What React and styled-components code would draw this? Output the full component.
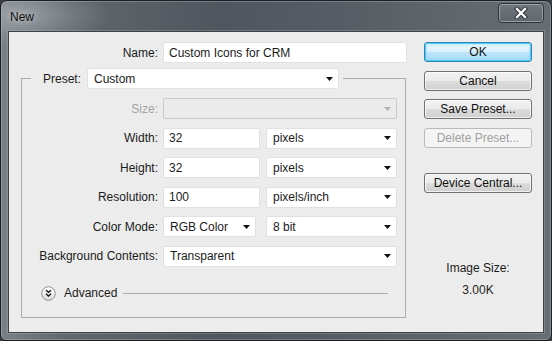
import React from "react";
import styled, { createGlobalStyle } from "styled-components";

const Global = createGlobalStyle`
  html, body { margin: 0; padding: 0; background: #3a3d40; }
  body { font-family: "Liberation Sans", Arial, sans-serif; font-size: 12px; }
  * { box-sizing: border-box; }
`;

const Window = styled.div`
  width: 552px;
  height: 341px;
  border: 1px solid #1c2024;
  border-radius: 7px 7px 6px 6px;
  padding: 0 7px 7px 7px;
  display: flex;
  flex-direction: column;
  background:
    radial-gradient(ellipse 90px 30px at 20px 14px, rgba(200,205,210,0.45), rgba(200,205,210,0) 100%),
    linear-gradient(90deg, #7a8086 0%, #60676d 12%, #4f565d 40%, #555c63 60%, #5e656b 80%, #676d73 100%);
  box-shadow: inset 0 0 0 1px rgba(190,196,202,0.35);
`;

const TitleBar = styled.div`
  height: 30px;
  display: flex;
  align-items: center;
  justify-content: space-between;
  padding-left: 2px;
`;

const Title = styled.span`
  color: #111;
  font-size: 12px;
  margin-top: 2px;
  text-shadow: 0 0 6px rgba(255,255,255,0.6);
`;

const CloseButton = styled.div`
  align-self: flex-start;
  width: 46px;
  height: 20px;
  margin-top: 2px;
  border: 1px solid #2f3439;
  border-radius: 4px;
  box-shadow: inset 0 0 0 1px rgba(170,177,184,0.75);
  background: linear-gradient(180deg, rgba(125,132,139,0.45), rgba(90,97,104,0.45));
  display: flex;
  align-items: center;
  justify-content: center;
`;

const Client = styled.div`
  flex: 1;
  display: flex;
  background: #ececec;
  border: 1px solid #3d4348;
  box-shadow: 0 0 0 1px rgba(200,206,210,0.25);
`;

const LeftPane = styled.div`
  width: 398px;
  padding-top: 10px;
  display: flex;
  flex-direction: column;
`;

const Row = styled.div`
  display: grid;
  grid-template-columns: ${(p) => p.$label}px 1fr;
  column-gap: 5px;
  align-items: center;
  height: 21px;
`;

const Label = styled.span`
  text-align: right;
  color: ${(p) => (p.$disabled ? "#a3a3a3" : "#1b1b1b")};
  white-space: nowrap;
`;

const Input = styled.div`
  height: 21px;
  width: ${(p) => (p.$w ? `${p.$w}px` : "auto")};
  background: #fff;
  border: 1px solid #e1e1e1;
  border-radius: 2px;
  padding-left: 5px;
  display: flex;
  align-items: center;
  color: #1b1b1b;
  white-space: nowrap;
`;

const SelectBox = styled.div`
  height: 21px;
  width: ${(p) => (p.$w ? `${p.$w}px` : "auto")};
  background: ${(p) => (p.$disabled ? "#ebebeb" : "#fff")};
  border: 1px solid ${(p) => (p.$disabled ? "#c9c9c9" : "#e1e1e1")};
  border-radius: 2px;
  padding: 0 5px 0 6px;
  display: flex;
  align-items: center;
  justify-content: space-between;
  color: #1b1b1b;
  white-space: nowrap;
`;

const Controls = styled.div`
  display: flex;
  justify-content: space-between;
  height: 21px;
`;

const Group = styled.fieldset`
  margin: 5px 0 0 12px;
  width: 385px;
  border: 1px solid #acacac;
  padding: 0 8px 17px 0;
  min-width: 0;
`;

const Legend = styled.legend`
  margin-left: 9px;
  padding: 0 4px 0 12px;
  display: flex;
  align-items: center;
  height: 21px;
`;

const LegendLabel = styled.span`
  width: 44px;
  color: #1b1b1b;
`;

const Rows = styled.div`
  margin-top: 9px;
  display: flex;
  flex-direction: column;
  gap: 8.5px;
`;

const AdvancedRow = styled.div`
  margin: 19.5px 9px 0 19px;
  height: 14px;
  display: flex;
  align-items: center;
`;

const AdvancedText = styled.span`
  margin-left: 8px;
  color: #1b1b1b;
`;

const Rule = styled.div`
  flex: 1;
  height: 1px;
  margin-left: 6px;
  background: #acacac;
`;

const RightPane = styled.div`
  width: 108px;
  margin-left: 17px;
  padding-top: 10px;
  display: flex;
  flex-direction: column;
  align-items: stretch;
`;

const Button = styled.div`
  height: 20px;
  margin-top: ${(p) => p.$mt ?? 8.5}px;
  border-radius: 3px;
  display: flex;
  align-items: center;
  justify-content: center;
  white-space: nowrap;
  color: ${(p) => (p.$disabled ? "#a0a0a0" : "#111")};
  border: 1px solid ${(p) => (p.$primary ? "#3c7fb1" : p.$disabled ? "#b7bbbe" : "#707070")};
  background: ${(p) =>
    p.$primary
      ? "linear-gradient(180deg, #eaf6fd 0%, #d9f0fc 50%, #bee6fd 50%, #a7d9f5 100%)"
      : p.$disabled
      ? "#f4f4f4"
      : "linear-gradient(180deg, #f2f2f2 0%, #ebebeb 50%, #dddddd 50%, #cfcfcf 100%)"};
  box-shadow: ${(p) =>
    p.$primary
      ? "inset 0 0 0 1px #48d0fb, inset 0 0 3px 1px rgba(120,220,255,0.7)"
      : p.$disabled
      ? "none"
      : "inset 0 0 0 1px rgba(255,255,255,0.7)"};
`;

const InfoLabel = styled.div`
  text-align: center;
  color: #1b1b1b;
  margin-top: ${(p) => p.$mt}px;
  line-height: 14px;
`;

function Arrow({ disabled }) {
  return (
    <svg width="7" height="4" viewBox="0 0 7 4">
      <path d="M0 0 H7 L3.5 4 Z" fill={disabled ? "#b5b5b5" : "#111"} />
    </svg>
  );
}

function Select({ w, disabled, children }) {
  return (
    <SelectBox $w={w} $disabled={disabled}>
      <span>{children}</span>
      <Arrow disabled={disabled} />
    </SelectBox>
  );
}

function AdvancedIcon() {
  return (
    <svg width="15" height="15" viewBox="0 0 15 15">
      <defs>
        <linearGradient id="adv" x1="0" y1="0" x2="0" y2="1">
          <stop offset="0" stopColor="#ffffff" />
          <stop offset="1" stopColor="#dcdcdc" />
        </linearGradient>
      </defs>
      <circle cx="7.5" cy="7.5" r="6.8" fill="url(#adv)" stroke="#8e8e8e" strokeWidth="1" />
      <path d="M5 4.2 L7.5 6.4 L10 4.2" fill="none" stroke="#1a1a1a" strokeWidth="1.4" />
      <path d="M5 7.8 L7.5 10 L10 7.8" fill="none" stroke="#1a1a1a" strokeWidth="1.4" />
    </svg>
  );
}

function CloseGlyph() {
  return (
    <svg width="14" height="12" viewBox="0 0 14 12">
      <path d="M3 2 L11 10 M11 2 L3 10" stroke="#2a2e32" strokeWidth="4.2" strokeLinecap="square" />
      <path d="M3 2 L11 10 M11 2 L3 10" stroke="#ffffff" strokeWidth="2.3" strokeLinecap="square" />
    </svg>
  );
}

export default function App() {
  return (
    <>
      <Global />
      <Window>
        <TitleBar>
          <Title>New</Title>
          <CloseButton>
            <CloseGlyph />
          </CloseButton>
        </TitleBar>
        <Client>
          <LeftPane>
            <Row $label={149}>
              <Label>Name:</Label>
              <Input $w={244}>Custom Icons for CRM</Input>
            </Row>
            <Group>
              <Legend>
                <LegendLabel>Preset:</LegendLabel>
                <Select w={252}>Custom</Select>
              </Legend>
              <Rows>
                <Row $label={136}>
                  <Label $disabled>Size:</Label>
                  <Select disabled> </Select>
                </Row>
                <Row $label={136}>
                  <Label>Width:</Label>
                  <Controls>
                    <Input $w={97}>32</Input>
                    <Select w={131}>pixels</Select>
                  </Controls>
                </Row>
                <Row $label={136}>
                  <Label>Height:</Label>
                  <Controls>
                    <Input $w={97}>32</Input>
                    <Select w={131}>pixels</Select>
                  </Controls>
                </Row>
                <Row $label={136}>
                  <Label>Resolution:</Label>
                  <Controls>
                    <Input $w={97}>100</Input>
                    <Select w={131}>pixels/inch</Select>
                  </Controls>
                </Row>
                <Row $label={136}>
                  <Label>Color Mode:</Label>
                  <Controls>
                    <Select w={93}>RGB Color</Select>
                    <Select w={131}>8 bit</Select>
                  </Controls>
                </Row>
                <Row $label={136}>
                  <Label>Background Contents:</Label>
                  <Select>Transparent</Select>
                </Row>
              </Rows>
              <AdvancedRow>
                <AdvancedIcon />
                <AdvancedText>Advanced</AdvancedText>
                <Rule />
              </AdvancedRow>
            </Group>
          </LeftPane>
          <RightPane>
            <Button $primary $mt={0}>OK</Button>
            <Button>Cancel</Button>
            <Button>Save Preset...</Button>
            <Button $disabled>Delete Preset...</Button>
            <Button $mt={25.5}>Device Central...</Button>
            <InfoLabel $mt={68}>Image Size:</InfoLabel>
            <InfoLabel $mt={8}>3.00K</InfoLabel>
          </RightPane>
        </Client>
      </Window>
    </>
  );
}
